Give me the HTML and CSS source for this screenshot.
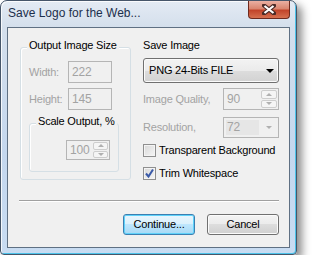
FILE: index.html
```html
<!DOCTYPE html>
<html lang="en">
<head>
    <meta charset="UTF-8">
    <title>Save Logo for the Web...</title>
    <link rel="stylesheet" href="styles.css">
</head>
<body>
    <div class="window">
        <div class="titlebar">
            <span class="title">Save Logo for the Web...</span>
            <div class="close">
                <svg width="14" height="11" viewBox="0 0 14 11">
                    <path d="M2 1.5 L12 9.5 M12 1.5 L2 9.5" stroke="#4a2a26" stroke-width="4.2" stroke-linecap="square"/>
                    <path d="M2.5 2 L11.5 9 M11.5 2 L2.5 9" stroke="#fff" stroke-width="2.2"/>
                </svg>
            </div>
        </div>
        <div class="client">
            <div class="columns">
                <div class="group output-group">
                    <div class="group-title">Output Image Size</div>
                    <div class="field first">
                        <span class="field-label">Width:</span>
                        <div class="edit">222</div>
                    </div>
                    <div class="field">
                        <span class="field-label">Height:</span>
                        <div class="edit">145</div>
                    </div>
                    <div class="group scale-group">
                        <div class="group-title">Scale Output, %</div>
                        <div class="spin scale-spin">
                            <span class="spin-value">100</span>
                            <div class="spin-buttons">
                                <span class="spin-btn"><i class="arrow-up"></i></span>
                                <span class="spin-btn"><i class="arrow-down"></i></span>
                            </div>
                        </div>
                    </div>
                </div>

                <div class="save-col">
                    <div class="col-title">Save Image</div>
                    <div class="dropdown">
                        <span>PNG 24-Bits FILE</span>
                        <i class="drop-arrow"></i>
                    </div>
                    <div class="opt-row quality-row">
                        <span>Image Quality,</span>
                        <div class="spin quality-spin">
                            <span class="spin-value">90</span>
                            <div class="spin-buttons">
                                <span class="spin-btn"><i class="arrow-up"></i></span>
                                <span class="spin-btn"><i class="arrow-down"></i></span>
                            </div>
                        </div>
                    </div>
                    <div class="opt-row resolution-row">
                        <span>Resolution,</span>
                        <div class="combo">
                            <span class="combo-value">72</span>
                            <i class="combo-arrow"></i>
                        </div>
                    </div>
                    <div class="check first-check">
                        <span class="box"></span>
                        <span>Transparent Background</span>
                    </div>
                    <div class="check second-check">
                        <span class="box checked">
                            <svg width="11" height="11" viewBox="0 0 11 11">
                                <path d="M2 5.5 L4.5 8.5 L9 1.5" fill="none" stroke="#3a5aa8" stroke-width="2"/>
                            </svg>
                        </span>
                        <span>Trim Whitespace</span>
                    </div>
                </div>
            </div>

            <div class="separator"></div>

            <div class="buttons">
                <div class="btn default">Continue...</div>
                <div class="btn">Cancel</div>
            </div>
        </div>
    </div>
</body>
</html>
```

FILE: styles.css
```css
body {
    margin: 0;
    background-color: #fff;
    font-family: "Liberation Sans", Arial, sans-serif;
    font-size: 11px;
    line-height: 13px;
    letter-spacing: -0.2px;
    white-space: nowrap;
    color: #000;
}
.window {
    box-sizing: border-box;
    width: 297px;
    height: 255px;
    padding: 0 6px 6px 6px;
    border: 1px solid #46566a;
    border-radius: 7px 7px 4px 4px;
    background: linear-gradient(to bottom, #e4ebf4 0, #d4dfec 26px, #c4d7ee 60%, #c8dcf2 100%);
    box-shadow: inset 1px 1px 0 rgba(255,255,255,0.8), inset -1px -1px 0 #4cc3ea, 5px 5px 9px rgba(0,0,0,0.45);
}
.titlebar {
    height: 26px;
    display: flex;
    justify-content: space-between;
    align-items: flex-start;
}
.title {
    padding: 6px 0 0 1px;
    font-size: 12px;
    letter-spacing: 0;
    color: #1c2f4c;
}
.close {
    box-sizing: border-box;
    width: 42px;
    height: 18px;
    border: 1px solid #6e2a1e;
    border-top: none;
    border-radius: 0 0 4px 4px;
    background: linear-gradient(to bottom, #eab0a2 0, #d98670 45%, #c2442a 55%, #d6704f 100%);
    display: flex;
    justify-content: center;
    align-items: center;
}

.client {
    box-sizing: border-box;
    height: 221px;
    padding: 0 10px 0 12px;
    border: 1px solid #5f7083;
    background-color: #f0f0f0;
}
.columns {
    display: flex;
    gap: 12px;
}

/* group boxes */
.group {
    box-sizing: border-box;
    padding-left: 8px;
    border: 1px solid #d5dfe5;
    border-radius: 3px;
    box-shadow: inset 1px 1px 0 #fff;
}
.group-title {
    width: fit-content;
    margin: -9px 0 0 -2px;
    padding: 0 2px;
    background-color: #f0f0f0;
}
.output-group {
    width: 111px;
    height: 133px;
    margin-top: 19px;
}
.field {
    display: flex;
    align-items: center;
    margin-top: 5px;
    color: #a3a3a3;
}
.field.first {
    margin-top: 9px;
}
.field-label {
    width: 39px;
}
.edit {
    box-sizing: border-box;
    width: 44px;
    height: 22px;
    padding-left: 3px;
    border: 1px solid #b5b5b5;
    font-size: 12px;
    line-height: 20px;
}
.scale-group {
    width: 90px;
    height: 49px;
    margin-top: 13px;
}

/* spin boxes */
.spin {
    box-sizing: border-box;
    display: flex;
    justify-content: space-between;
    padding: 1px 1px 1px 3px;
    border: 1px solid #b5b5b5;
    color: #a3a3a3;
    font-size: 12px;
}
.scale-spin {
    width: 44px;
    height: 20px;
    margin: 12px 0 0 28px;
    line-height: 16px;
}
.quality-spin {
    width: 56px;
    height: 22px;
    line-height: 18px;
}
.spin-buttons {
    display: flex;
    flex-direction: column;
    gap: 1px;
    width: 15px;
}
.quality-spin .spin-buttons {
    width: 16px;
}
.spin-btn {
    flex: 1;
    display: flex;
    justify-content: center;
    align-items: center;
    border: 1px solid #cdcdcd;
    border-radius: 2px;
    background-color: #f5f5f5;
}
.arrow-up, .arrow-down {
    width: 0;
    height: 0;
    border-left: 3px solid transparent;
    border-right: 3px solid transparent;
}
.arrow-up {
    border-bottom: 3px solid #b0b0b0;
}
.arrow-down {
    border-top: 3px solid #b0b0b0;
}

/* right column */
.save-col {
    width: 136px;
    padding-top: 11px;
}
.dropdown {
    box-sizing: border-box;
    height: 25px;
    margin-top: 6px;
    padding: 0 4px 0 5px;
    display: flex;
    justify-content: space-between;
    align-items: center;
    border: 1px solid #707070;
    border-radius: 3px;
    background: linear-gradient(to bottom, #f3f3f3 0, #ebebeb 50%, #dddddd 50%, #d2d2d2 100%);
    box-shadow: inset 0 0 0 1px #fbfbfb;
}
.drop-arrow {
    width: 0;
    height: 0;
    border-left: 4px solid transparent;
    border-right: 4px solid transparent;
    border-top: 4px solid #000;
}
.opt-row {
    display: flex;
    justify-content: space-between;
    align-items: center;
    color: #a3a3a3;
}
.quality-row {
    margin-top: 5px;
}
.resolution-row {
    margin-top: 7px;
}
.combo {
    box-sizing: border-box;
    width: 56px;
    height: 21px;
    padding: 2px 6px 2px 2px;
    display: flex;
    justify-content: space-between;
    align-items: center;
    border: 1px solid #b5b5b5;
    font-size: 12px;
}
.combo-value {
    width: 32px;
    height: 15px;
    padding-left: 1px;
    line-height: 15px;
    background-color: #e6e6e6;
}
.combo-arrow {
    width: 0;
    height: 0;
    border-left: 3px solid transparent;
    border-right: 3px solid transparent;
    border-top: 3px solid #b0b0b0;
}
.check {
    display: flex;
    align-items: center;
    gap: 3px;
    height: 13px;
}
.first-check {
    margin-top: 6px;
}
.second-check {
    margin-top: 10px;
}
.box {
    box-sizing: border-box;
    flex: none;
    width: 13px;
    height: 13px;
    display: flex;
    justify-content: center;
    align-items: center;
    border: 1px solid #8f8f8f;
    background: linear-gradient(135deg, #d8d8d8 0, #f6f6f6 100%);
    box-shadow: inset 0 0 0 1px #f4f4f4;
}

/* bottom */
.separator {
    margin: 20px 0 0 -1px;
    border-top: 1px solid #a0a0a0;
    border-bottom: 1px solid #fff;
}
.buttons {
    display: flex;
    justify-content: flex-end;
    gap: 12px;
    margin-top: 12px;
}
.btn {
    box-sizing: border-box;
    width: 72px;
    height: 21px;
    display: flex;
    justify-content: center;
    align-items: center;
    border: 1px solid #707070;
    border-radius: 3px;
    background: linear-gradient(to bottom, #f3f3f3 0, #ebebeb 50%, #dddddd 50%, #d0d0d0 100%);
    box-shadow: inset 0 0 0 1px #fbfbfb;
}
.btn.default {
    border-color: #3c7fb1;
    background: linear-gradient(to bottom, #eaf6fd 0, #d9f0fc 50%, #bee6fd 50%, #a7d9f5 100%);
    box-shadow: inset 0 0 0 1px #5fd2fa;
}
```
